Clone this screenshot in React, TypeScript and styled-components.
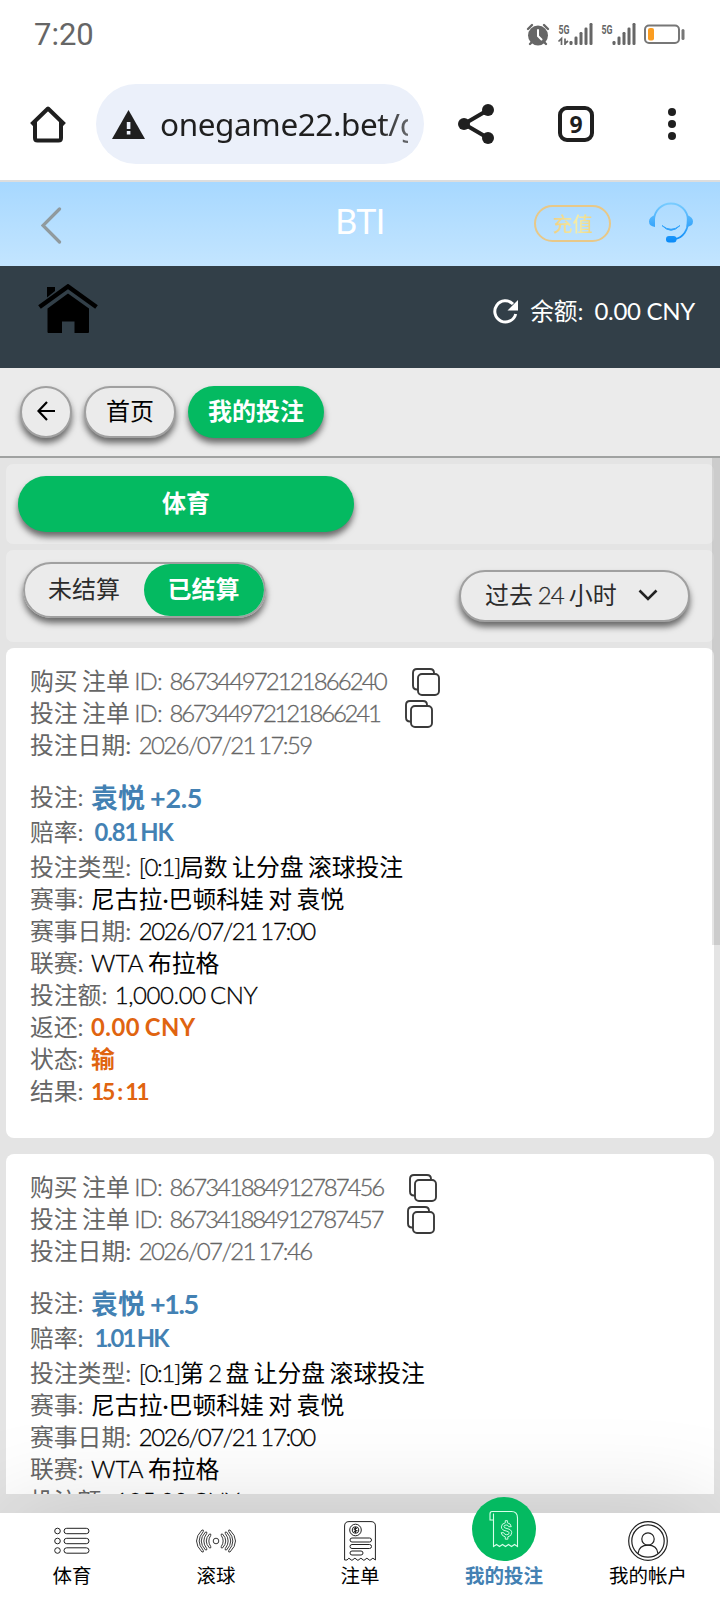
import React from "react";
import styled, { createGlobalStyle, css } from "styled-components";

const GREEN = "#04ba61";
const BLUE = "#4381b3";
const ORANGE = "#e06410";

const Global = createGlobalStyle`
  * { box-sizing: border-box; }
  html, body { margin: 0; padding: 0; background: #fff; }
  body { font-family: Lato, "Noto Sans CJK SC", sans-serif; font-size: 24px; color: #000; }
  svg { display: block; flex: none; }
`;

const Screen = styled.div`
  width: 720px;
  height: 1600px;
  display: flex;
  flex-direction: column;
  overflow: hidden;
  background: #fff;
`;

const StatusBar = styled.div`
  height: 68px;
  padding: 2px 34px 0 34px;
  display: flex;
  align-items: center;
  justify-content: space-between;
  color: #666;
`;

const Clock = styled.span`
  font: 400 31px/66px Roboto, sans-serif;
`;

const BrowserBar = styled.div`
  height: 114px;
  padding: 16px 37px 0 28px;
  display: flex;
  align-items: flex-start;
  border-bottom: 2px solid #ddd;
`;

const BrowserIcon = styled.div<{ $left: number }>`
  height: 80px;
  display: flex;
  align-items: center;
  margin-left: ${(p) => p.$left}px;
`;

const AddressPill = styled.div`
  width: 328px;
  height: 80px;
  margin-left: 28px;
  padding: 0 16px;
  display: flex;
  align-items: center;
  gap: 15px;
  border-radius: 40px;
  background: #ebf0fa;
`;

const Url = styled.span`
  flex: none;
  width: 248px;
  overflow: hidden;
  white-space: nowrap;
  font: 400 31.5px/80px "Noto Sans", sans-serif;
  letter-spacing: -0.4px;
  color: #1f1f1f;
  mask-image: linear-gradient(90deg, #000 88%, rgba(0, 0, 0, 0.65));
`;

const TabCount = styled.div`
  width: 36px;
  height: 36px;
  border: 4px solid #1f1f1f;
  border-radius: 9px;
  display: flex;
  align-items: center;
  justify-content: center;
  font: 700 23px/28px "Noto Sans", sans-serif;
  color: #1f1f1f;
`;

const SiteHeader = styled.header`
  height: 84px;
  display: grid;
  grid-template-columns: 1fr auto 1fr;
  align-items: center;
  padding: 3px 27px 0 41px;
  background: linear-gradient(#a7d8ff, #c3e5ff);
`;

const SiteTitle = styled.h1`
  margin: 0 0 10px -14px;
  font: 400 34px/40px Lato, sans-serif;
  letter-spacing: -0.6px;
  color: #fff;
`;

const HeaderActions = styled.div`
  display: flex;
  align-items: center;
  justify-content: flex-end;
  gap: 38px;
  padding-bottom: 5px;
`;

const Recharge = styled.button`
  width: 77px;
  height: 37px;
  padding: 0;
  border: 2px solid #e8c888;
  border-radius: 19px;
  background: none;
  font: 500 20px/31px "Noto Sans CJK SC", sans-serif;
`;

const GoldText = styled.span`
  background: linear-gradient(90deg, #f0cf80, #f4eda8 60%, #f0d27c);
  background-clip: text;
  color: transparent;
`;

const BalanceBar = styled.div`
  height: 102px;
  padding: 18px 25px 0 38px;
  display: flex;
  justify-content: space-between;
  align-items: flex-start;
  background: #323f48;
`;

const Balance = styled.div`
  height: 56px;
  display: flex;
  align-items: center;
  font-size: 24px;
  color: #fff;
`;

const BalanceLabel = styled.span`
  margin-left: 11px;
  padding-bottom: 4px;
  font-size: 23.7px;
`;

const BalanceAmount = styled.span`
  margin-left: 11px;
  padding-bottom: 4px;
  letter-spacing: -0.3px;
`;

const Crumbs = styled.nav`
  height: 90px;
  padding: 18px 20px 0;
  display: flex;
  gap: 12px;
  background: #ebebeb;
  border-bottom: 2px solid #a0a2a1;
`;

const raised = css`
  box-shadow: 0 5px 6px rgba(0, 0, 0, 0.55);
`;

const Pill = styled.button<{ $w: number; $h: number; $on?: boolean }>`
  width: ${(p) => p.$w}px;
  height: ${(p) => p.$h}px;
  padding: 0 0 3px;
  display: flex;
  align-items: center;
  justify-content: center;
  border: ${(p) => (p.$on ? "0" : "2px solid #a0a0a0")};
  border-radius: 28px;
  background: ${(p) => (p.$on ? GREEN : "#ebebeb")};
  color: ${(p) => (p.$on ? "#fff" : "#000")};
  font: ${(p) => (p.$on ? 700 : 400)} 24px/36px Lato, "Noto Sans CJK SC", sans-serif;
  ${raised}
`;

const Content = styled.main`
  position: relative;
  height: 1036px;
  padding: 6px;
  display: flex;
  flex-direction: column;
  overflow: hidden;
  background: #e4e4e4;
`;

const ScrollThumb = styled.div`
  position: absolute;
  top: 0;
  right: 0;
  width: 8px;
  height: 487px;
  background: rgba(0, 0, 0, 0.1);
`;

const Panel = styled.section<{ $h: number }>`
  flex: none;
  width: 708px;
  height: ${(p) => p.$h}px;
  margin-bottom: 6px;
  padding: 12px 24px 0 12px;
  display: flex;
  justify-content: space-between;
  align-items: flex-start;
  border-radius: 7px;
  background: #ebebeb;
`;

const Segmented = styled.div`
  width: 243px;
  height: 56px;
  margin-left: 4.5px;
  display: flex;
  border: 2px solid #a0a0a0;
  border-radius: 28px;
  ${raised}
`;

const Segment = styled.button<{ $on?: boolean }>`
  width: ${(p) => (p.$on ? 120 : 119)}px;
  padding: 0 0 4px;
  border: 0;
  border-radius: 26px;
  background: ${(p) => (p.$on ? GREEN : "transparent")};
  color: ${(p) => (p.$on ? "#fff" : "#2c2c2c")};
  font: ${(p) => (p.$on ? 700 : 400)} 24px/36px "Noto Sans CJK SC", sans-serif;
`;

const RangeSelect = styled.button`
  width: 231px;
  height: 52px;
  margin-top: 8px;
  padding: 0 30px 2px 24px;
  display: flex;
  align-items: center;
  justify-content: space-between;
  border: 2px solid #a0a0a0;
  border-radius: 26px;
  background: #ebebeb;
  color: #2c2c2c;
  font: 400 24px/36px Lato, "Noto Sans CJK SC", sans-serif;
  word-spacing: -1.4px;
  ${raised}
`;

const Card = styled.article`
  flex: none;
  width: 708px;
  height: 490px;
  margin-bottom: 16px;
  padding: 18px 24px 0;
  border-radius: 8px;
  background: #fff;
`;

const Row = styled.div<{ $top?: number; $lift?: number }>`
  height: 32px;
  margin-top: ${(p) => p.$top ?? 0}px;
  padding-bottom: ${(p) => p.$lift ?? 0}px;
  display: flex;
  align-items: center;
  white-space: nowrap;
  font-size: 23.8px;
  line-height: 30px;
  word-spacing: -1.6px;
  color: #666;
`;

const Label = styled.span`
  flex: none;
`;

type Tone = "muted" | "dark" | "pick" | "price" | "alert";

const tones = {
  muted: css`color: #666;`,
  dark: css`color: #000;`,
  pick: css`color: ${BLUE}; font-weight: 700; font-size: 27px; padding-top: 2px;`,
  price: css`color: ${BLUE}; font-weight: 700; margin-left: 11px;`,
  alert: css`color: ${ORANGE}; font-weight: 700;`,
};

const Value = styled.span<{ $tone: Tone }>`
  margin-left: 7.5px;
  ${(p) => tones[p.$tone]}
`;

const LatinRun = styled.span<{ $light: boolean; $track: number }>`
  letter-spacing: ${(p) => p.$track}px;
  ${(p) => p.$light && "font-weight: 300; font-size: 24px; -webkit-text-stroke: 0.3px currentColor;"}
`;

/* Latin letters and digits are set lighter and tighter than the Chinese text round them. */
const Mixed = ({ text, track = 0, bold = false }: { text: string; track?: number; bold?: boolean }) => (
  <>
    {text.split(/([\u0021-\u007e][\u0020-\u007e]*[\u0021-\u007e]|[\u0021-\u007e])/).map((part, i) =>
      i % 2 ? (
        <LatinRun key={i} $light={!bold} $track={track}>{part}</LatinRun>
      ) : (
        part
      ),
    )}
  </>
);

const Score = styled.span`
  font-size: 23px;
  letter-spacing: -2.4px;
  word-spacing: 1.2px;
`;

const CopyButton = styled.button<{ $gap: number }>`
  margin-left: ${(p) => p.$gap}px;
  margin-bottom: -2px;
  padding: 0;
  border: 0;
  background: none;
`;

const BottomArea = styled.footer`
  position: relative;
  height: 106px;
  padding-top: 19px;
  background: #e4e4e4;
`;

const TabBar = styled.nav`
  height: 87px;
  display: grid;
  grid-template-columns: repeat(5, 144px);
  background: #fff;
  box-shadow: 0 0 100px rgba(0, 0, 0, 0.15);
`;

const Tab = styled.a<{ $on?: boolean }>`
  display: flex;
  flex-direction: column;
  align-items: center;
  font-size: 19.5px;
  line-height: 26px;
  font-weight: ${(p) => (p.$on ? 700 : 400)};
  color: ${(p) => (p.$on ? BLUE : "#000")};
`;

const TabIcon = styled.div<{ $on?: boolean }>`
  width: 64px;
  height: ${(p) => (p.$on ? 64 : 56)}px;
  margin-top: ${(p) => (p.$on ? -16 : 0)}px;
  margin-bottom: ${(p) => (p.$on ? 2 : -6)}px;
  display: flex;
  align-items: center;
  justify-content: center;
  border-radius: 50%;
  background: ${(p) => (p.$on ? GREEN : "transparent")};
`;

const StatusIcons = () => (
  <svg width="160" height="24" viewBox="0 0 160 24" fill="#666">
    <circle cx="12" cy="12.5" r="10" />
    <path d="M2 6 6 2M18 2l4 4M4 21l3-3M20 21l-3-3" stroke="#666" strokeWidth="2.4" strokeLinecap="round" />
    <path d="M12 7v6l3.5 3.5" stroke="#fff" strokeWidth="2" fill="none" strokeLinecap="round" />
    <text x="32.500" y="10.500" fontFamily="Roboto" fontWeight="700" fontSize="12.500" textLength="11" lengthAdjust="spacingAndGlyphs">5G</text>
    <text x="75.500" y="10.500" fontFamily="Roboto" fontWeight="700" fontSize="12.500" textLength="11" lengthAdjust="spacingAndGlyphs">5G</text>
    <path d="M35.500 22v-6.500l-3 3M39 15.500V22M39 20.500l3-2.500" stroke="#666" strokeWidth="1.700" fill="none" />
    {[0, 43].map((dx) => (
      <g key={dx} transform={`translate(${dx} 0)`}>
        <rect x="43.500" y="18" width="3" height="4" rx="1.200" />
        <rect x="48.500" y="13.500" width="3" height="8.500" rx="1.200" />
        <rect x="53.500" y="9" width="3" height="13" rx="1.200" />
        <rect x="58.500" y="4.500" width="3" height="17.500" rx="1.200" />
        <rect x="63.500" y="0" width="3" height="22" rx="1.200" />
      </g>
    ))}
    <rect x="119" y="2.500" width="34" height="17.500" rx="4" fill="none" stroke="#777" strokeWidth="2" />
    <rect x="122" y="5" width="6" height="12.500" rx="2" fill="#fb9d21" />
    <rect x="155.500" y="6" width="3" height="11" rx="1.500" fill="#777" />
  </svg>
);

const OutlineHome = () => (
  <svg width="40" height="40" viewBox="0 0 40 40" fill="none" stroke="#1f1f1f" strokeWidth="4">
    <path d="M8 19v16.500q0 2.500 2.500 2.500h21q2.500 0 2.500-2.500V19" transform="translate(-1 -1.500)" />
    <path d="M3.500 20.500 20 4.500 36.500 20.500" strokeLinejoin="round" />
  </svg>
);

const Warning = () => (
  <svg width="33" height="29" viewBox="0 0 33 29">
    <path d="M16.500 0 33 29H0z" fill="#1f1f1f" />
    <path d="M14.800 12h3.600v7h-3.600zM14.800 21h3.600v3.600h-3.600z" fill="#ebf0fa" />
  </svg>
);

const Share = () => (
  <svg width="36" height="40" viewBox="0 0 36 40" fill="#1f1f1f">
    <path d="M30 6 6 20l24 14" fill="none" stroke="#1f1f1f" strokeWidth="4" />
    <circle cx="30" cy="6" r="6" />
    <circle cx="6" cy="20" r="6" />
    <circle cx="30" cy="34" r="6" />
  </svg>
);

const More = () => (
  <svg width="8" height="32" viewBox="0 0 8 32" fill="#1f1f1f">
    <circle cx="4" cy="4" r="4" />
    <circle cx="4" cy="16" r="4" />
    <circle cx="4" cy="28" r="4" />
  </svg>
);

const ChevronLeft = () => (
  <svg width="21" height="37" viewBox="0 0 21 37" fill="none" stroke="#909a9e" strokeWidth="3.200" strokeLinecap="round">
    <path d="M18.500 2 2 18.500l16.500 16.500" />
  </svg>
);

const Headset = () => (
  <svg width="44" height="42" viewBox="0 0 44 42" fill="none">
    <defs>
      <linearGradient id="headset" x1="0" y1="0" x2="0" y2="42" gradientUnits="userSpaceOnUse">
        <stop offset="0" stopColor="#7cceff" />
        <stop offset="1" stopColor="#0588f8" />
      </linearGradient>
    </defs>
    <path d="M5 18C5.500 8 13 1.500 22 1.500S38.500 8 39 18c.5 10-5 17.500-13 19" stroke="url(#headset)" strokeWidth="1.800" />
    <path d="M6 13Q0 15 0 19.500T6 25zM38 13q6 2 6 6.500T37.500 25z" fill="url(#headset)" />
    <path d="M13 23.500q9 9.500 18 0-9 7.500-18 0z" fill="url(#headset)" stroke="url(#headset)" strokeWidth="1" strokeLinejoin="round" />
    <rect x="17" y="34" width="10.500" height="6.500" rx="3" fill="url(#headset)" />
  </svg>
);

const SolidHome = () => (
  <svg width="60" height="50" viewBox="0 0 60 50">
    <path d="M9 3h8v4l-8 6.500z" />
    <path d="M2 23.500 30.500 3 59 23.500" transform="translate(-.5 -.5)" fill="none" stroke="#000" strokeWidth="4.500" />
    <path d="M9.500 24.500 30 9.500l21 15V48q0 1-1 1H36.500V37.500h-12.500V49H10.500q-1 0-1-1z" />
  </svg>
);

const Reload = () => (
  <svg width="26" height="26" viewBox="0 0 26 26">
    <path d="M20 5A10.600 10.600 0 1 0 22.700 15" fill="none" stroke="#fff" strokeWidth="3" />
    <path d="M25 1v10.500H14.500z" fill="#fff" />
  </svg>
);

const ArrowLeft = () => (
  <svg width="18" height="20" viewBox="0 0 18 20" fill="none" stroke="#000" strokeWidth="2.200">
    <path d="M10 1 1.500 10l8.500 9M1.500 10H18" />
  </svg>
);

const ChevronDown = () => (
  <svg width="20" height="12" viewBox="0 0 20 12" fill="none" stroke="#222" strokeWidth="2.600">
    <path d="m1.500 1.500 8.500 8.500 8.500-8.500" />
  </svg>
);

const CopyIcon = () => (
  <svg width="28" height="28" viewBox="0 0 28 28" fill="none" stroke="#3a3a3a" strokeWidth="1.900">
    <rect x="6" y="6" width="21" height="21" rx="4" />
    <path d="M6 21.500H5Q1 21.500 1 17.500V5q0-4 4-4h13q4 0 4 4v1" />
  </svg>
);

const ListIcon = () => (
  <svg width="36" height="28" viewBox="0 0 36 28" fill="none" stroke="#222" strokeWidth="1">
    {[4, 14, 23.5].map((y) => (
      <g key={y}>
        <circle cx="3.500" cy={y} r="2.800" />
        <rect x="10" y={y - 2.7} width="25" height="5.400" rx="2.700" />
      </g>
    ))}
  </svg>
);

const LiveIcon = () => (
  <svg width="40" height="24" viewBox="0 0 40 24" fill="none" stroke="#222" strokeWidth="0.900">
    <circle cx="20" cy="12" r="2.800" />
    {[false, true].map((flip) => (
      <g key={String(flip)} transform={flip ? "matrix(-1 0 0 1 40 0)" : undefined}>
        <path d="M6 1Q-5 12 6 23q2 .5 1.300-1.500Q-1 12 7.300 2.500 8 .5 6 1z" />
        <path d="M9.500 3Q1 12 9.500 21q2 .4 1.200-1.500Q5 12 10.700 4.500 11.500 2.500 9.500 3z" />
        <path d="M13.500 5Q7 12 13.500 19q2 .3 1.200-1.500Q11 12 14.700 6.500 15.500 4.500 13.500 5z" />
      </g>
    ))}
  </svg>
);

const TicketIcon = () => (
  <svg width="32" height="40" viewBox="0 0 32 40" fill="none" stroke="#222" strokeWidth="1">
    <path d="M.6 39V5Q.6.6 5 .6h22Q31.400.6 31.400 5v34l-2.500-1.800-3 2.200-3-2.200-3 2.200-3-2.200-3 2.200-3-2.200-3 2.200-3-2.200L3 39z" />
    <circle cx="11.500" cy="9" r="5.800" />
    <circle cx="11.500" cy="9" r="3.300" />
    <path d="M13 7.500q-3-1-3 .5t2.500 1.500-2.500 1M11.500 6v6" />
    <rect x="6" y="17" width="21.500" height="4" rx="2" />
    <rect x="6" y="23.500" width="21.500" height="4" rx="2" />
    <rect x="6" y="30" width="13" height="4" rx="2" />
  </svg>
);

const BillIcon = () => (
  <svg width="31" height="38" viewBox="0 0 31 38" fill="none" stroke="#d9ffea" strokeWidth="1.100">
    <path d="M4.500 10V36.500l3-2 3 2 3-2 3 2 3-2 3 2 3-2 3 2V8q0-6.500-6-6.500H3Q1 1.500 1 4v6h3.500V3.500" />
    <path d="M17 9.500v2.500q4 .5 4.500 4.500h-3q-.5-2-3-2t-2.500 2q0 1.500 3.500 2.200 5.500 1 5.500 4.800 0 4-4.500 4.800V31h-3v-2.700q-4-.8-4.800-4.800h3q.8 2.400 3.500 2.400 2.800 0 2.800-2.200 0-1.500-3.500-2.200-5.500-1-5.500-4.800 0-3.700 4.500-4.700V9.500z" transform="translate(3.800 2.500) scale(.86)" />
  </svg>
);

const AccountIcon = () => (
  <svg width="40" height="40" viewBox="0 0 40 40" fill="none" stroke="#222" strokeWidth="1.200">
    <circle cx="20" cy="20" r="19.300" />
    <circle cx="20" cy="20" r="16.200" />
    <circle cx="20" cy="18" r="6.200" />
    <path d="M10 32.500q1-8.300 10-8.300t10 8.300" />
  </svg>
);

interface Bet {
  purchaseId: string;
  betId: string;
  idTrack: [number, number];
  placed: string;
  pick: string;
  pickTrack: number;
  odds: string;
  oddsTrack: number;
  type: string;
  stake: string;
  outcome?: { returned: string; status: string; result: string };
}

const bets: Bet[] = [
  {
    purchaseId: "867344972121866240",
    betId: "867344972121866241",
    idTrack: [-1.9, -2.25],
    placed: "2026/07/21 17:59",
    pick: "袁悦 +2.5",
    pickTrack: -0.3,
    odds: "0.81 HK",
    oddsTrack: -1.1,
    type: "[0:1]局数 让分盘 滚球投注",
    stake: "1,000.00 CNY",
    outcome: { returned: "0.00 CNY", status: "输", result: "15 : 11" },
  },
  {
    purchaseId: "867341884912787456",
    betId: "867341884912787457",
    idTrack: [-2.05, -2.1],
    placed: "2026/07/21 17:46",
    pick: "袁悦 +1.5",
    pickTrack: -1.4,
    odds: "1.01 HK",
    oddsTrack: -1.8,
    type: "[0:1]第 2 盘 让分盘 滚球投注",
    stake: "195.00 CNY",
  },
];

const BetCard = ({ bet }: { bet: Bet }) => (
  <Card>
    <Row $lift={2}>
      <Label>购买 注单 <Mixed text="ID:" track={-0.8} /></Label>
      <Value $tone="muted"><Mixed text={bet.purchaseId} track={bet.idTrack[0]} /></Value>
      <CopyButton $gap={26}><CopyIcon /></CopyButton>
    </Row>
    <Row $lift={2}>
      <Label>投注 注单 <Mixed text="ID:" track={-0.8} /></Label>
      <Value $tone="muted"><Mixed text={bet.betId} track={bet.idTrack[1]} /></Value>
      <CopyButton $gap={25}><CopyIcon /></CopyButton>
    </Row>
    <Row $lift={2}>
      <Label>投注日期:</Label>
      <Value $tone="muted"><Mixed text={bet.placed} track={-1.6} /></Value>
    </Row>
    <Row $top={19}>
      <Label>投注:</Label>
      <Value $tone="pick"><Mixed text={bet.pick} track={bet.pickTrack} bold /></Value>
    </Row>
    <Row $top={3}>
      <Label>赔率:</Label>
      <Value $tone="price"><Mixed text={bet.odds} track={bet.oddsTrack} bold /></Value>
    </Row>
    <Row $top={3}>
      <Label>投注类型:</Label>
      <Value $tone="dark"><Mixed text={bet.type} track={-1.3} /></Value>
    </Row>
    <Row>
      <Label>赛事:</Label>
      <Value $tone="dark">尼古拉·巴顿科娃 对 袁悦</Value>
    </Row>
    <Row>
      <Label>赛事日期:</Label>
      <Value $tone="dark"><Mixed text="2026/07/21 17:00" track={-1.4} /></Value>
    </Row>
    <Row>
      <Label>联赛:</Label>
      <Value $tone="dark"><Mixed text="WTA 布拉格" /></Value>
    </Row>
    <Row>
      <Label>投注额:</Label>
      <Value $tone="dark"><Mixed text={bet.stake} track={-0.45} /></Value>
    </Row>
    {bet.outcome && (
      <>
        <Row>
          <Label>返还:</Label>
          <Value $tone="alert"><Mixed text={bet.outcome.returned} track={0.5} bold /></Value>
        </Row>
        <Row>
          <Label>状态:</Label>
          <Value $tone="alert">{bet.outcome.status}</Value>
        </Row>
        <Row>
          <Label>结果:</Label>
          <Value $tone="alert"><Score>{bet.outcome.result}</Score></Value>
        </Row>
      </>
    )}
  </Card>
);

const tabs = [
  { name: "体育", icon: <ListIcon /> },
  { name: "滚球", icon: <LiveIcon /> },
  { name: "注单", icon: <TicketIcon /> },
  { name: "我的投注", icon: <BillIcon />, on: true },
  { name: "我的帐户", icon: <AccountIcon /> },
];

export default function App() {
  return (
    <Screen>
      <Global />
      <StatusBar>
        <Clock>7:20</Clock>
        <StatusIcons />
      </StatusBar>
      <BrowserBar>
        <BrowserIcon $left={0}><OutlineHome /></BrowserIcon>
        <AddressPill>
          <Warning />
          <Url>onegame22.bet/g</Url>
        </AddressPill>
        <BrowserIcon $left={34}><Share /></BrowserIcon>
        <BrowserIcon $left={64}><TabCount>9</TabCount></BrowserIcon>
        <BrowserIcon $left={74}><More /></BrowserIcon>
      </BrowserBar>
      <SiteHeader>
        <ChevronLeft />
        <SiteTitle>BTI</SiteTitle>
        <HeaderActions>
          <Recharge><GoldText>充值</GoldText></Recharge>
          <Headset />
        </HeaderActions>
      </SiteHeader>
      <BalanceBar>
        <SolidHome />
        <Balance>
          <Reload />
          <BalanceLabel>余额:</BalanceLabel>
          <BalanceAmount>0.00 CNY</BalanceAmount>
        </Balance>
      </BalanceBar>
      <Crumbs>
        <Pill $w={52} $h={52}><ArrowLeft /></Pill>
        <Pill $w={92} $h={52}>首页</Pill>
        <Pill $w={136} $h={52} $on>我的投注</Pill>
      </Crumbs>
      <Content>
        <Panel $h={80}>
          <Pill $w={336} $h={56} $on>体育</Pill>
        </Panel>
        <Panel $h={92}>
          <Segmented>
            <Segment>未结算</Segment>
            <Segment $on>已结算</Segment>
          </Segmented>
          <RangeSelect>
            <span><Mixed text="过去 24 小时" track={-0.8} /></span>
            <ChevronDown />
          </RangeSelect>
        </Panel>
        {bets.map((bet) => (
          <BetCard key={bet.purchaseId} bet={bet} />
        ))}
        <ScrollThumb />
      </Content>
      <BottomArea>
        <TabBar>
          {tabs.map((tab) => (
            <Tab key={tab.name} $on={tab.on}>
              <TabIcon $on={tab.on}>{tab.icon}</TabIcon>
              {tab.name}
            </Tab>
          ))}
        </TabBar>
      </BottomArea>
    </Screen>
  );
}
